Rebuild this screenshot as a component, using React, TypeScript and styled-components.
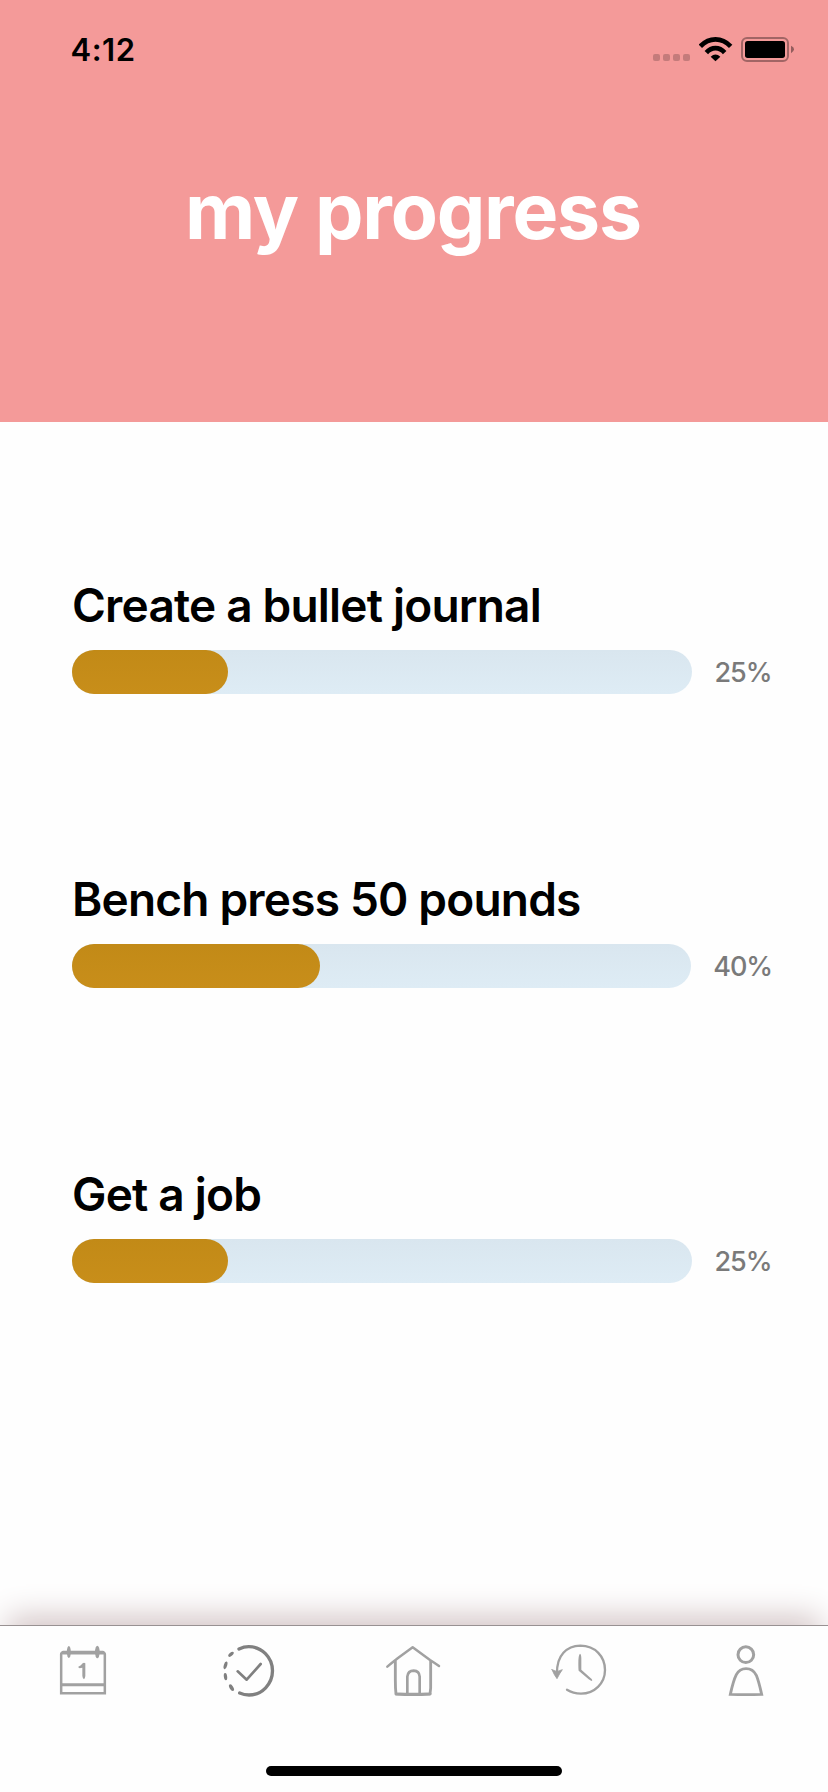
import React from 'react';
import styled, { createGlobalStyle } from 'styled-components';

const GlobalStyle = createGlobalStyle`
  *, *::before, *::after { box-sizing: border-box; }
  body { margin: 0; background: #fefefe; }
`;

const Screen = styled.div`
  display: flex;
  flex-direction: column;
  width: 828px;
  height: 1792px;
  overflow: hidden;
  background: #fefefe;
  color: #000;
  font-family: Inter, 'Liberation Sans', sans-serif;
`;

const Header = styled.header`
  flex: none;
  height: 422px;
  background: #f49a99;
`;

const StatusBar = styled.div`
  display: flex;
  align-items: center;
  justify-content: space-between;
  height: 99px;
  padding: 0 34px 0 70.5px;
`;

const Clock = styled.span`
  font-size: 31px;
  font-weight: 600;
  line-height: 40px;
  letter-spacing: 0.5px;
`;

const StatusIcons = styled.div`
  display: flex;
  align-items: center;
  svg { display: block; }
`;

const Title = styled.h1`
  margin: 63px 0 0;
  padding-right: 2px;
  text-align: center;
  font-size: 77px;
  font-weight: 700;
  line-height: 98px;
  letter-spacing: -1.2px;
  color: #fff;
`;

const Goals = styled.main`
  flex: 1;
  display: flex;
  flex-direction: column;
  gap: 170.3px;
  padding: 154px 0 0 72px;
`;

const Goal = styled.section`
  height: 124px;
`;

const GoalName = styled.h2`
  margin: 0;
  height: 74px;
  font-size: 46px;
  font-weight: 600;
  line-height: 59px;
  letter-spacing: -0.8px;
  white-space: nowrap;
`;

const BarRow = styled.div`
  display: flex;
  align-items: center;
  width: 700px;
  height: 44px;
`;

const Track = styled.div`
  width: 620px;
  height: 44px;
  border-radius: 22px;
  background: linear-gradient(#d9e6ef, #deecf5);
`;

const Fill = styled.div`
  height: 44px;
  border-radius: 22px;
  background: linear-gradient(#c28a17, #c88e1a);
`;

const Percent = styled.span`
  margin-left: 22.5px;
  font-size: 27px;
  font-weight: 500;
  line-height: 44px;
  padding-top: 2px;
  letter-spacing: -1.1px;
  color: #7a7a7a;
`;

const TabBar = styled.nav`
  flex: none;
  height: 167px;
  display: flex;
  flex-direction: column;
  align-items: center;
  border-top: 1px solid #989192;
  background: #fefefe;
  box-shadow: 0 -16px 30px -8px #d2c3c4;
`;

const Tabs = styled.div`
  display: flex;
  width: 100%;
  height: 140px;
  padding-top: 14px;
`;

const Tab = styled.a<{ $active?: boolean }>`
  flex: 1;
  display: flex;
  justify-content: center;
  color: ${(p) => (p.$active ? '#808080' : '#a1a1a1')};
  svg {
    width: 60px;
    height: 60px;
    fill: none;
    stroke: currentColor;
    stroke-linecap: round;
    stroke-linejoin: round;
  }
`;

const HomeIndicator = styled.div`
  width: 296px;
  height: 10px;
  border-radius: 5px;
  background: #000;
`;

const goals = [
  { name: 'Create a bullet journal', percent: 25 },
  { name: 'Bench press 50 pounds', percent: 40 },
  { name: 'Get a job', percent: 25 },
];

const CellDots = () => (
  <svg width="46" height="26" viewBox="39 39 138 78" fill="#c47b7b">
    {[39, 69, 99, 129].map((x) => (
      <rect key={x} x={x} y="90" width="21" height="21" rx="6" />
    ))}
  </svg>
);

const Wifi = () => (
  <svg width="42" height="26" viewBox="177 39 126 78">
    <g fill="none" stroke="#000" strokeWidth="14">
      <path d="M181 67Q201 46 226.500 46T272 67" />
      <path d="M199 86Q211 72.500 226.500 72.500T254 86" />
    </g>
    <path d="M212 98Q226.500 85 241 98L226.500 112Z" />
  </svg>
);

const Battery = () => (
  <svg width="53" height="26" viewBox="303 39 159 78">
    <rect x="306" y="42" width="138" height="69" rx="15" fill="none" stroke="#a16565" strokeWidth="6" />
    <rect x="315" y="51" width="120" height="51" rx="8" />
    <path d="M453 65Q462 69 462 76T453 88Z" fill="#935c5c" />
  </svg>
);

const CalendarIcon = () => (
  <svg viewBox="38 120 180 180">
    <path d="M62.500 280V162Q62.500 158 68 158H188Q193.500 158 193.500 163V280Z" strokeWidth="7.500" strokeLinejoin="miter" />
    <path d="M68 158H188" strokeWidth="11" />
    <path d="M62 254H194" strokeWidth="9" strokeLinecap="butt" />
    <g fill="currentColor" stroke="none">
      <ellipse cx="85.500" cy="156" rx="6" ry="18" />
      <ellipse cx="171" cy="156" rx="7" ry="19" />
      <path d="M113 201Q123 196 127 190Q131 187 135 190V228Q134 235 131 238Q127 236 126 228V203L118 205Z" />
    </g>
  </svg>
);

const ProgressIcon = () => (
  <svg viewBox="535 120 180 180">
    <path d="M598 147Q613 140 627 140A71 72.500 0 0 1 628 285Q613 285 600 279" strokeWidth="10" />
    <path d="M594 214L621 239L663 192" strokeWidth="8" />
    <g fill="currentColor" stroke="none">
      <ellipse cx="574" cy="163" rx="5" ry="10" transform="rotate(48 574 163)" />
      <ellipse cx="557.500" cy="196" rx="5" ry="12" transform="rotate(16 557.500 196)" />
      <ellipse cx="557.500" cy="230" rx="5" ry="11" transform="rotate(-7 557.500 230)" />
      <ellipse cx="575.500" cy="263" rx="5.500" ry="11" transform="rotate(-32 575.500 263)" />
    </g>
  </svg>
);

const HouseIcon = () => (
  <svg viewBox="42 120 180 180">
    <path d="M52 200Q66 188 84 174L128 142L180 180Q194 189 207 198" strokeWidth="7.500" />
    <path d="M76 184V240Q76 265 78 282Q130 286 180 282Q183 265 182 240V184" strokeWidth="8.500" />
    <path d="M112 282V230Q114 212 131 212Q148 213 149 230V282" strokeWidth="8" />
    <path d="M78 282H181" strokeWidth="7" />
  </svg>
);

const HistoryIcon = () => (
  <svg viewBox="539 120 180 180">
    <path d="M560 222C558 165 590 138 630 137C675 137 704 170 704 210C704 250 672 281 632 281Q608 280 590 269" strokeWidth="7" />
    <path d="M545 209Q552 211 560 215Q569 211 576 209Q568 220 560 236Q551 224 545 209Z" fill="currentColor" strokeWidth="2.500" />
    <path d="M629 161Q633 163 633 175V209L664 237Q668 242 664 243Q660 242 655 238L625 212Q624 210 624 190Q624 165 629 161Z" fill="currentColor" stroke="none" />
  </svg>
);

const PersonIcon = () => (
  <svg viewBox="76 180 180 180">
    <circle cx="168.500" cy="224" r="23.500" strokeWidth="9" />
    <path d="M122 343Q131 302 140 284C148 269 158 266 169 266C181 266 192 270 200 286Q207 303 216 343Q169 345 122 343Z" strokeWidth="8.500" strokeLinejoin="miter" />
  </svg>
);

export default function App() {
  return (
    <Screen>
      <GlobalStyle />
      <Header>
        <StatusBar>
          <Clock>4:12</Clock>
          <StatusIcons>
            <CellDots />
            <Wifi />
            <Battery />
          </StatusIcons>
        </StatusBar>
        <Title>my progress</Title>
      </Header>
      <Goals>
        {goals.map((goal) => (
          <Goal key={goal.name}>
            <GoalName>{goal.name}</GoalName>
            <BarRow>
              <Track>
                <Fill style={{ width: `calc(${goal.percent}% + 0.6px)` }} />
              </Track>
              <Percent>{goal.percent}%</Percent>
            </BarRow>
          </Goal>
        ))}
      </Goals>
      <TabBar>
        <Tabs>
          <Tab><CalendarIcon /></Tab>
          <Tab $active><ProgressIcon /></Tab>
          <Tab><HouseIcon /></Tab>
          <Tab><HistoryIcon /></Tab>
          <Tab><PersonIcon /></Tab>
        </Tabs>
        <HomeIndicator />
      </TabBar>
    </Screen>
  );
}
